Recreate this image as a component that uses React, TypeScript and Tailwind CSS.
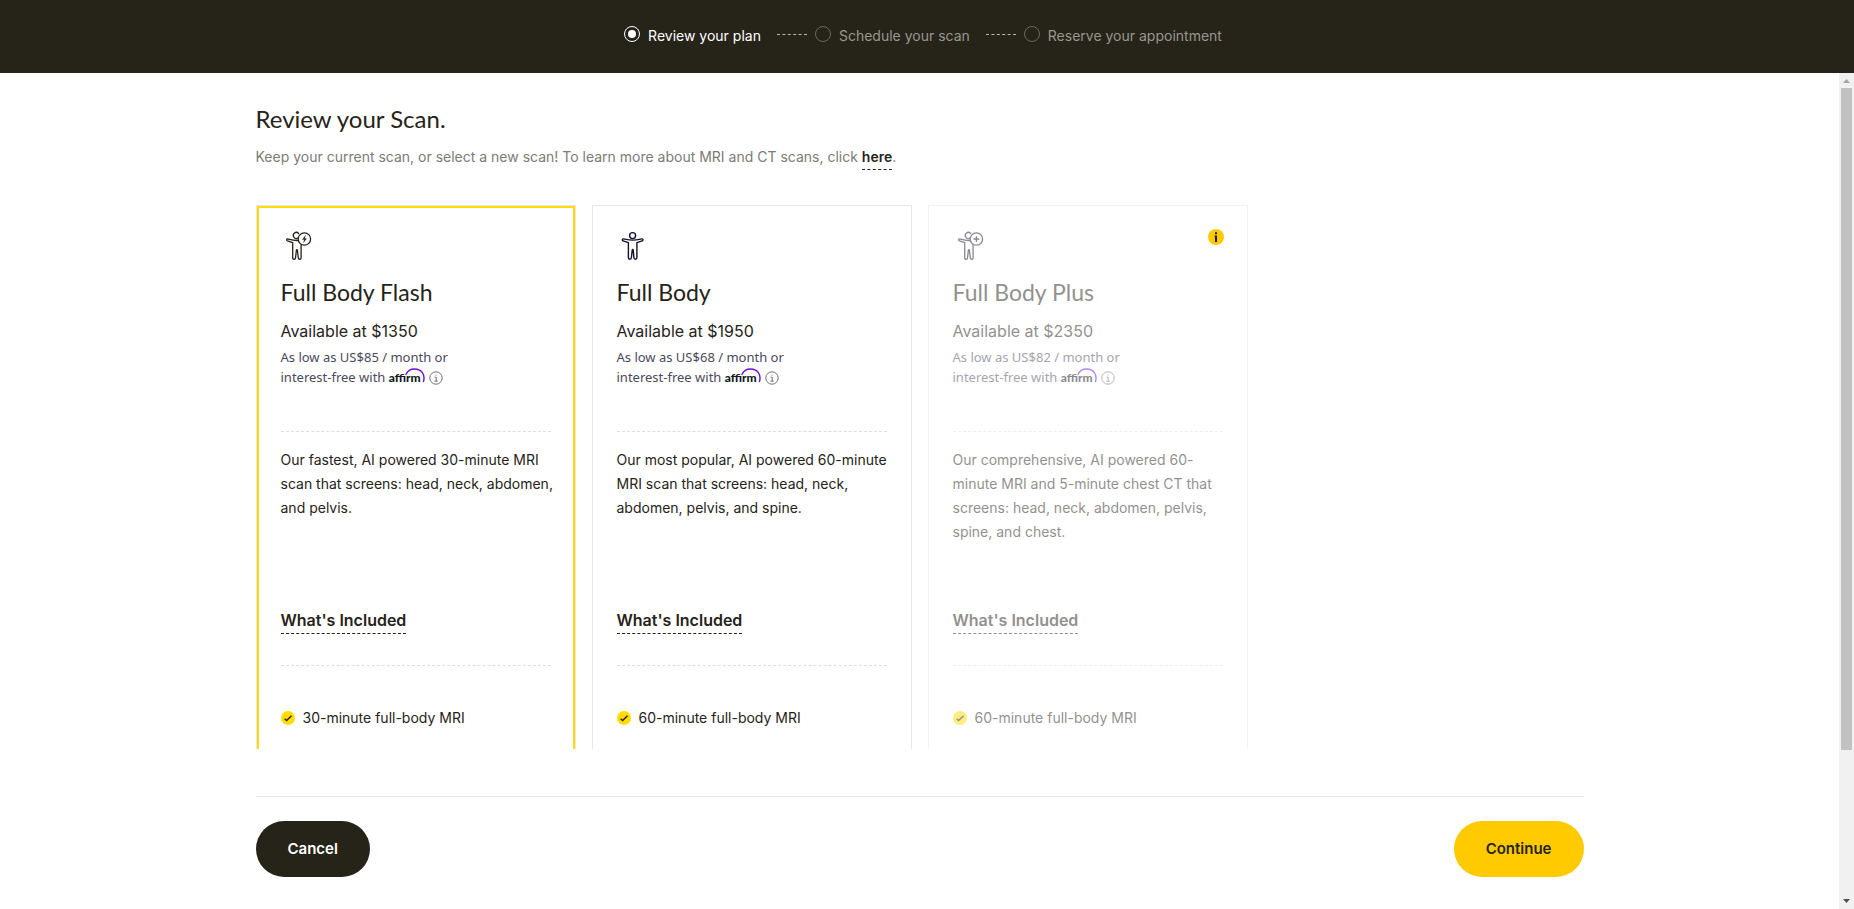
import React from "react";

type Kind = "flash" | "body" | "plus";

interface Plan {
  kind: Kind;
  name: string;
  price: number;
  monthly: number;
  description: string;
  feature: string;
  selected?: boolean;
  disabled?: boolean;
}

const plans: Plan[] = [
  {
    kind: "flash",
    name: "Full Body Flash",
    price: 1350,
    monthly: 85,
    description: "Our fastest, AI powered 30-minute MRI scan that screens: head, neck, abdomen, and pelvis.",
    feature: "30-minute full-body MRI",
    selected: true,
  },
  {
    kind: "body",
    name: "Full Body",
    price: 1950,
    monthly: 68,
    description: "Our most popular, AI powered 60-minute MRI scan that screens: head, neck, abdomen, pelvis, and spine.",
    feature: "60-minute full-body MRI",
  },
  {
    kind: "plus",
    name: "Full Body Plus",
    price: 2350,
    monthly: 82,
    description:
      "Our comprehensive, AI powered 60-minute MRI and 5-minute chest CT that screens: head, neck, abdomen, pelvis, spine, and chest.",
    feature: "60-minute full-body MRI",
    disabled: true,
  },
];

const steps = ["Review your plan", "Schedule your scan", "Reserve your appointment"];

function BodyIcon({ kind }: { kind: Kind }) {
  if (kind === "body") {
    return (
      <svg viewBox="0 0 32 32" className="size-8" fill="none" stroke="#14122b" strokeWidth="1.4" strokeLinejoin="round" strokeLinecap="round" aria-hidden="true">
        <circle cx="15.6" cy="5.6" r="3" />
        <path d="M6.4 8.9c-1.2-.2-1.4 1.5-.3 1.9l5.3 1.9v15.1c0 1.9 2.8 1.9 3 0l.8-7.6c.1-.9.9-.9 1 0l.7 7.6c.2 1.9 3 1.9 3 0V12.7l5.3-1.9c1.1-.4.9-2.1-.3-1.9-2.7.5-5.500 1.200-9.200 1.200s-6.600-.7-9.300-1.200Z" />
      </svg>
    );
  }
  const color = kind === "flash" ? "#262319" : "#14122b";
  return (
    <svg viewBox="0 0 32 32" className="size-8" fill="none" stroke={color} strokeWidth="1.3" strokeLinejoin="round" strokeLinecap="round" aria-hidden="true">
      <path d="M17.600 3.500A3 3 0 1 0 16.700 8.100" />
      <path d="M17.100 10.500c-4.200.2-7.600-.8-10.200-1.500-1.300-.3-1.700 1.400-.5 1.900l5.300 1.700v15.300c0 1.800 2.600 1.800 2.800 0l.9-7.700c.1-.9.900-.9 1 0l.9 7.700c.2 1.800 2.800 1.800 2.800 0V14.600" />
      <circle cx="23.400" cy="9" r="6.200" />
      {kind === "flash" ? (
        <path d="M24.400 5.600l-3 3.900h1.900l-.7 3.100 3-4h-1.900Z" fill={color} strokeWidth=".3" />
      ) : (
        <path d="M23.400 6.600v4.800M21 9h4.800" />
      )}
    </svg>
  );
}

function Affirm() {
  return (
    <span className="relative inline-block text-xs font-black leading-5 text-[#101820]" style={{ fontFamily: 'Lato, "Open Sans", sans-serif' }}>
      affirm
      <svg viewBox="0 0 20 15" className="absolute -right-1 top-0 h-[15px] w-5" fill="none" stroke="#6a10e0" strokeWidth="1.400" strokeLinecap="round" aria-hidden="true">
        <path d="M1 6.500C2.500 3 5.800 1 9.500 1 16 1 20.500 6 18.500 13.500" />
      </svg>
    </span>
  );
}

function PlanCard({ plan }: { plan: Plan }) {
  const frame = plan.selected ? "border-[#e7e7f0]" : plan.disabled ? "border-[#f3f3f3]" : "border-[#e7e7e7]";
  const inner = plan.selected ? "border-[#ffdc00]" : "border-transparent";
  return (
    <article className={`relative w-80 shrink-0 border border-b-0 ${frame}`}>
      {plan.disabled && (
        <button type="button" aria-label="More information" className="absolute right-[23px] top-[23px] size-4">
          <svg viewBox="0 0 16 16" className="size-4" aria-hidden="true">
            <circle cx="8" cy="8" r="8" fill="#ffca00" />
            <path d="M7 3.200h2v2H7zM6.600 6.500H9V13H7V8h-.4z" fill="#1d1b2e" />
          </svg>
        </button>
      )}
      <div className={`h-full border-2 border-b-0 px-[22px] pt-[22px] ${inner} ${plan.disabled ? "opacity-50" : ""}`}>
        <BodyIcon kind={plan.kind} />
        <h2 className="mt-3 text-[23px] leading-9" style={{ fontFamily: "Lato, sans-serif" }}>
          {plan.name}
        </h2>
        <p className="mt-[9px] text-base leading-6">Available at ${plan.price}</p>
        <p className="mt-1 w-44 text-[13px] leading-5 text-[#4a4a5c]" style={{ fontFamily: '"Noto Sans", sans-serif' }}>
          As low as US${plan.monthly} / month or interest-free with <Affirm />
          <svg viewBox="0 0 14 14" className="ml-2 inline-block size-3.5 align-[-3px]" fill="none" stroke="#606070" strokeWidth=".9" aria-hidden="true">
            <circle cx="7" cy="7" r="6.200" />
            <path d="M5.600 6.200h1.600v4M5.400 10.200h3.400" />
            <circle cx="7" cy="4" r=".6" fill="#606070" stroke="none" />
          </svg>
        </p>
        <hr className="mt-[43px] border-t border-dashed border-[#dedede]" />
        <p className="-mr-2 mt-4 min-h-36 text-sm leading-6">{plan.description}</p>
        <div className="mt-[15px] flex">
          <a href="#included" className="border-b border-dashed border-[#262319] text-base font-semibold leading-[26px]">
            What's Included
          </a>
        </div>
        <hr className="mt-[31px] border-t border-dashed border-[#dedede]" />
        <ul className="mt-10">
          <li className="flex items-center gap-2 text-sm leading-6">
            <svg viewBox="0 0 14 14" className="size-3.5" fill="none" aria-hidden="true">
              <circle cx="7" cy="7" r="7" fill="#ffdc00" />
              <path d="M3.600 7.800l2 1.800 4.900-4.900" stroke="#262319" strokeWidth="1.400" />
            </svg>
            {plan.feature}
          </li>
        </ul>
      </div>
    </article>
  );
}

export default function App() {
  return (
    <div className="flex h-screen flex-col bg-white text-[#262319]" style={{ fontFamily: "Inter, sans-serif" }}>
      <header className="bg-[#262319] pb-[27px] pt-[26px]">
        <ol className="flex justify-center">
          {steps.map((step, i) => (
            <li key={step} className={`flex gap-2 text-sm leading-5 ${i === 0 ? "text-white" : "text-[#98978f]"}`}>
              {i > 0 && <span className="ml-2 mt-2 h-0 w-[30px] border-t border-dashed border-[#b5b4ad]" />}
              <svg viewBox="0 0 16 16" className="size-4" fill="none" aria-hidden="true">
                <circle cx="8" cy="8" r="7.500" stroke={i === 0 ? "#fff" : "#6b6960"} />
                {i === 0 && <circle cx="8" cy="8" r="4" fill="#fff" />}
              </svg>
              <span className="pr-2">{step}</span>
            </li>
          ))}
        </ol>
      </header>

      <div className="flex min-h-0 flex-1">
        <main className="flex min-w-0 flex-1 flex-col px-8 pb-8 pt-7">
          <div className="mx-auto flex min-h-0 w-full max-w-[1328px] flex-1 flex-col">
            <h1 className="text-2xl leading-9" style={{ fontFamily: "Lato, sans-serif" }}>
              Review your Scan.
            </h1>
            <p className="mt-2 text-sm leading-6 text-[#7c7b75]">
              Keep your current scan, or select a new scan! To learn more about MRI and CT scans, click{" "}
              <a href="#learn" className="border-b border-dashed border-[#262319] pb-1 font-semibold text-[#262319]">
                here
              </a>
              .
            </p>
            <section className="mt-9 flex min-h-0 flex-1 gap-4 overflow-hidden">
              {plans.map((plan) => (
                <PlanCard key={plan.kind} plan={plan} />
              ))}
            </section>
            <footer className="mt-[47px] flex justify-between border-t border-[#e7e7e7] pt-6">
              <button type="button" className="h-14 rounded-full bg-[#262319] px-8 text-[15px] font-semibold text-white">
                Cancel
              </button>
              <button type="button" className="h-14 rounded-full bg-[#ffca00] px-8 text-[15px] font-semibold">
                Continue
              </button>
            </footer>
          </div>
        </main>
        <div className="flex w-[15px] flex-col items-center bg-[#f1f1f1]" aria-hidden="true">
          <svg viewBox="0 0 15 15" className="size-[15px] shrink-0">
            <path d="M4 10h7L7.500 6z" fill="#a3a3a3" />
          </svg>
          <div className="w-[11px] grow-[662] bg-[#c1c1c1]" />
          <div className="grow-[144]" />
          <svg viewBox="0 0 15 15" className="size-[15px] shrink-0">
            <path d="M4 5h7L7.500 9z" fill="#505050" />
          </svg>
        </div>
      </div>
    </div>
  );
}
